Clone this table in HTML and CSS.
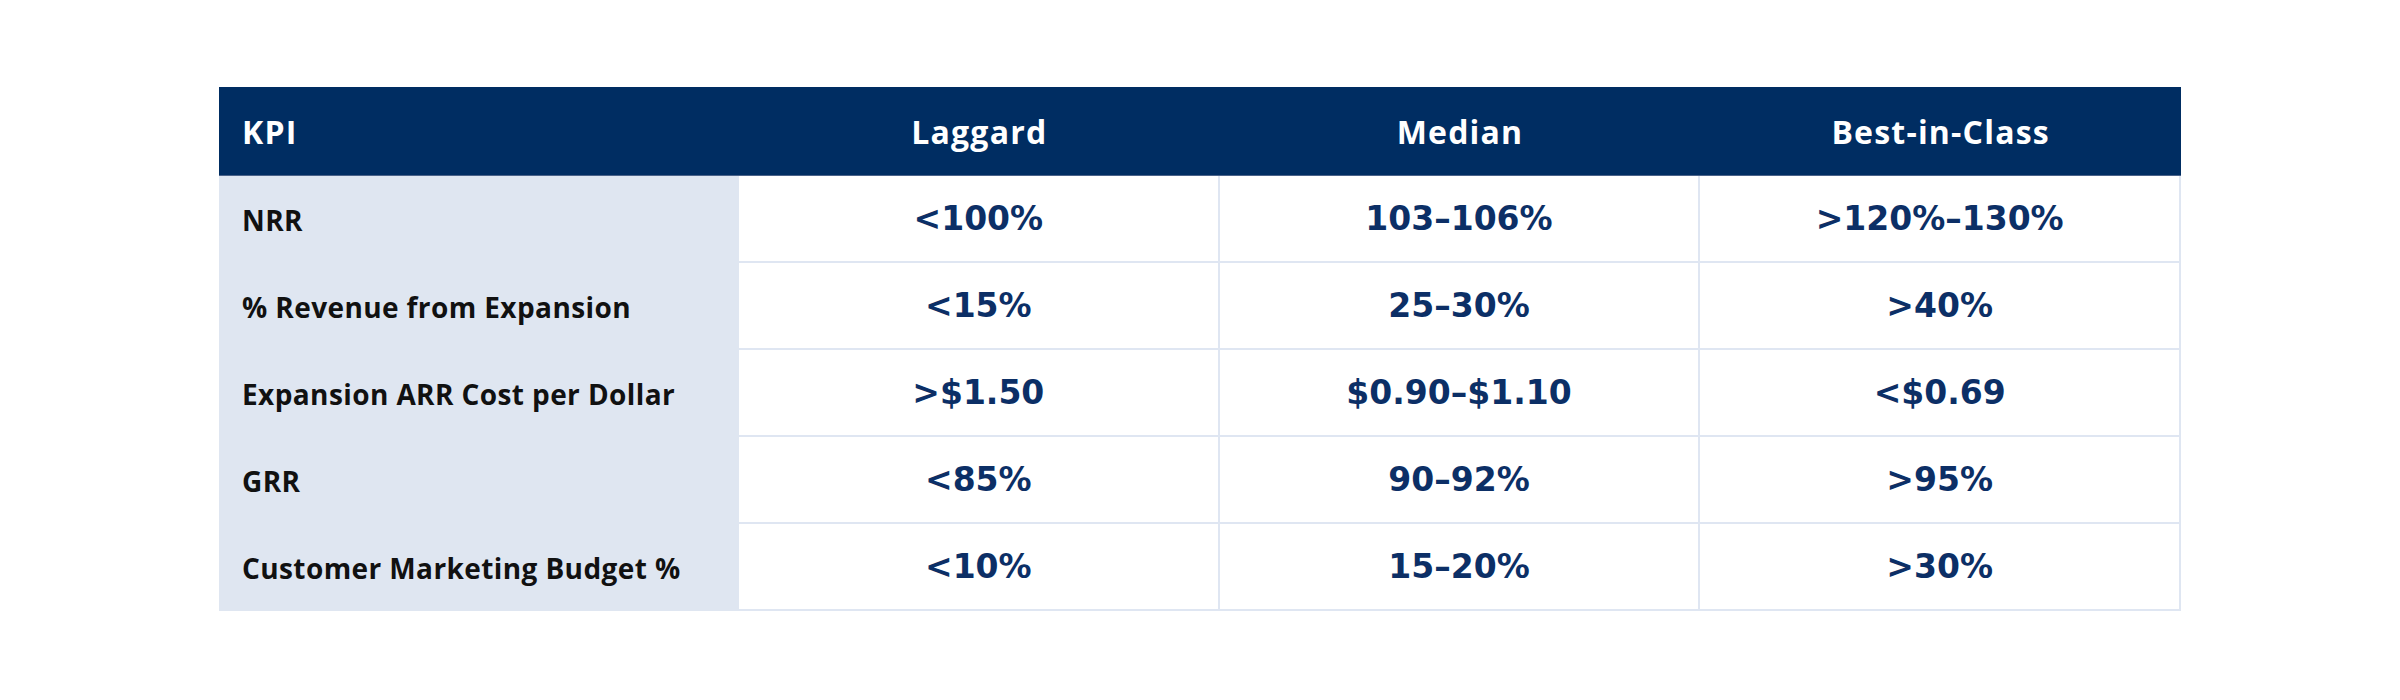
FILE: index.html
```html
<!DOCTYPE html>
<html lang="en">
<head>
<meta charset="utf-8">
<title>KPI Benchmarks</title>
<link rel="stylesheet" href="styles.css">
</head>
<body>
<main class="page">
  <div class="kpi-table">
    <div class="th th-kpi">KPI</div>
    <div class="th">Laggard</div>
    <div class="th">Median</div>
    <div class="th">Best-in-Class</div>

    <div class="label">NRR</div>
    <div class="val">&lt;100%</div>
    <div class="val">103–106%</div>
    <div class="val">&gt;120%–130%</div>

    <div class="label">% Revenue from Expansion</div>
    <div class="val">&lt;15%</div>
    <div class="val">25–30%</div>
    <div class="val">&gt;40%</div>

    <div class="label">Expansion ARR Cost per Dollar</div>
    <div class="val">&gt;$1.50</div>
    <div class="val">$0.90–$1.10</div>
    <div class="val">&lt;$0.69</div>

    <div class="label">GRR</div>
    <div class="val">&lt;85%</div>
    <div class="val">90–92%</div>
    <div class="val">&gt;95%</div>

    <div class="label">Customer Marketing Budget %</div>
    <div class="val">&lt;10%</div>
    <div class="val">15–20%</div>
    <div class="val">&gt;30%</div>
  </div>
</main>
</body>
</html>
```

FILE: styles.css
```css
html, body {
  margin: 0;
  padding: 0;
  background: #ffffff;
}

.page {
  padding: 87px 219px;
}

.kpi-table {
  display: grid;
  grid-template-columns: 520px repeat(3, 1fr);
  grid-auto-rows: 87px;
  grid-template-rows: 89px;
}

.th {
  background: #002d62;
  color: #ffffff;
  font-family: "Open Sans", "Noto Sans", sans-serif;
  font-weight: 700;
  font-size: 32px;
  letter-spacing: 1.2px;
  display: flex;
  align-items: center;
  justify-content: center;
  border-bottom: 1px solid #4a6289;
}

.th-kpi {
  justify-content: flex-start;
  padding-left: 23px;
}

.label {
  background: #dfe6f1;
  color: #111111;
  font-family: "Open Sans", "Noto Sans", sans-serif;
  font-weight: 700;
  font-size: 28px;
  letter-spacing: 0.4px;
  display: flex;
  align-items: center;
  padding-left: 23px;
}

.val {
  color: #0c2f66;
  font-family: "DejaVu Sans", sans-serif;
  font-weight: 700;
  font-size: 33px;
  display: flex;
  align-items: center;
  justify-content: center;
  border-right: 2px solid #dfe6f2;
  border-bottom: 2px solid #dfe6f2;
}
```
